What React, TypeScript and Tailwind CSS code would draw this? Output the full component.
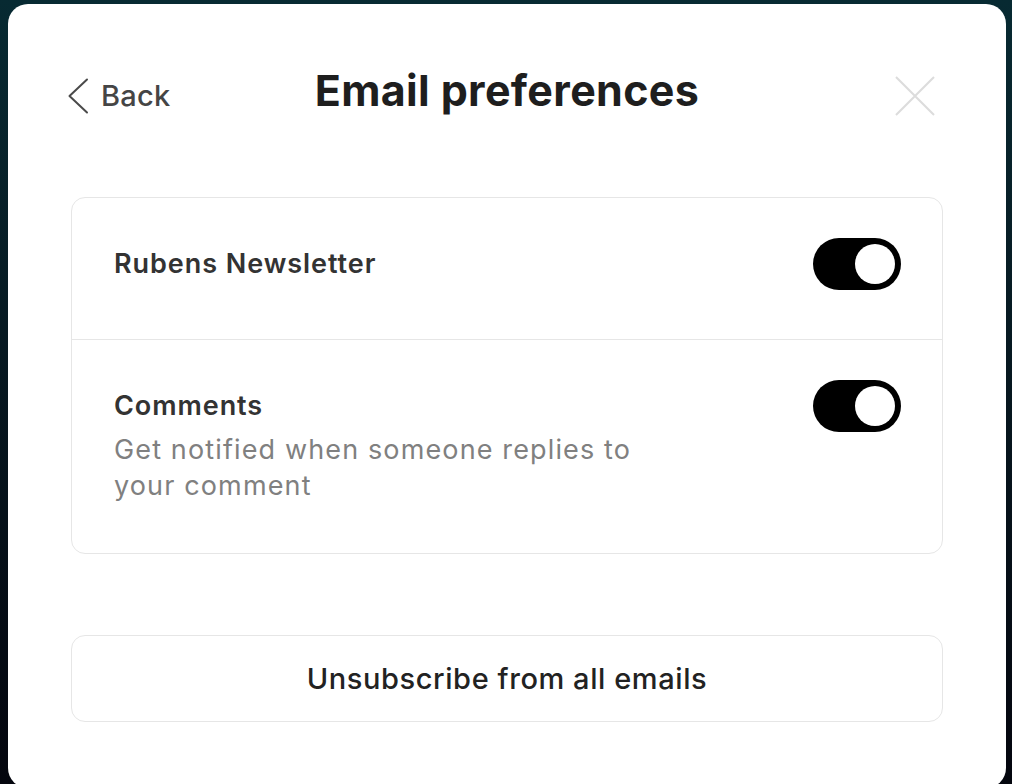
const Toggle = () => (
  <div className="flex h-[52px] w-[88px] shrink-0 items-center justify-end rounded-full bg-black p-[6px]">
    <div className="h-[40px] w-[40px] rounded-full bg-white" />
  </div>
)

export default function App() {
  return (
    <div className="flex h-[784px] w-[1012px] overflow-hidden bg-gradient-to-b from-[#072a32] to-[#04060e] pl-[8px] pr-[6px] pt-[4px] font-['Inter',sans-serif]">
      <div className="flex h-[784px] flex-1 flex-col rounded-[20px] bg-white px-[63px]">
        <header className="grid grid-cols-[1fr_auto_1fr] items-start pb-[75px] pt-[60px]">
          <button className="mt-[6px] flex h-[52px] items-center gap-[12px] justify-self-start text-[#454545]">
            <svg className="-ml-[4px]" width="22" height="36" viewBox="0 0 22 36" fill="none">
              <polyline points="20,1.5 2.5,18 20,34.5" stroke="#4a4a4a" strokeWidth="2" strokeLinecap="round" strokeLinejoin="round" />
            </svg>
            <span className="text-[29px] font-medium leading-[52px] tracking-[0.01em]">Back</span>
          </button>
          <h1 className="text-[43px] font-bold leading-[52px] tracking-[0.008em] text-[#1e1e1e]">Email preferences</h1>
          <button className="mr-[8px] mt-[12px] justify-self-end">
            <svg width="40" height="40" viewBox="0 0 40 40" fill="none">
              <path d="M1 1 L39 39 M39 1 L1 39" stroke="#dcdcdc" strokeWidth="2" />
            </svg>
          </button>
        </header>

        <section className="rounded-[14px] border border-[#e6e6e6]">
          <div className="flex items-start justify-between border-b border-[#e6e6e6] pb-[49px] pl-[42px] pr-[41px] pt-[40px]">
            <div className="text-[27px] font-semibold leading-[52px] tracking-[0.035em] text-[#333]">Rubens Newsletter</div>
            <Toggle />
          </div>
          <div className="flex items-start justify-between pb-[49px] pl-[42px] pr-[41px] pt-[40px]">
            <div>
              <div className="text-[27px] font-semibold leading-[52px] tracking-[0.035em] text-[#333]">Comments</div>
              <p className="w-[550px] text-[27px] leading-[36px] tracking-[0.042em] text-[#808080]">
                Get notified when someone replies to your comment
              </p>
            </div>
            <Toggle />
          </div>
        </section>

        <button className="mt-[81px] flex h-[87px] items-center justify-center rounded-[14px] border border-[#e6e6e6] text-[29px] font-medium tracking-[0.02em] text-[#222]">
          Unsubscribe from all emails
        </button>
      </div>
    </div>
  )
}
